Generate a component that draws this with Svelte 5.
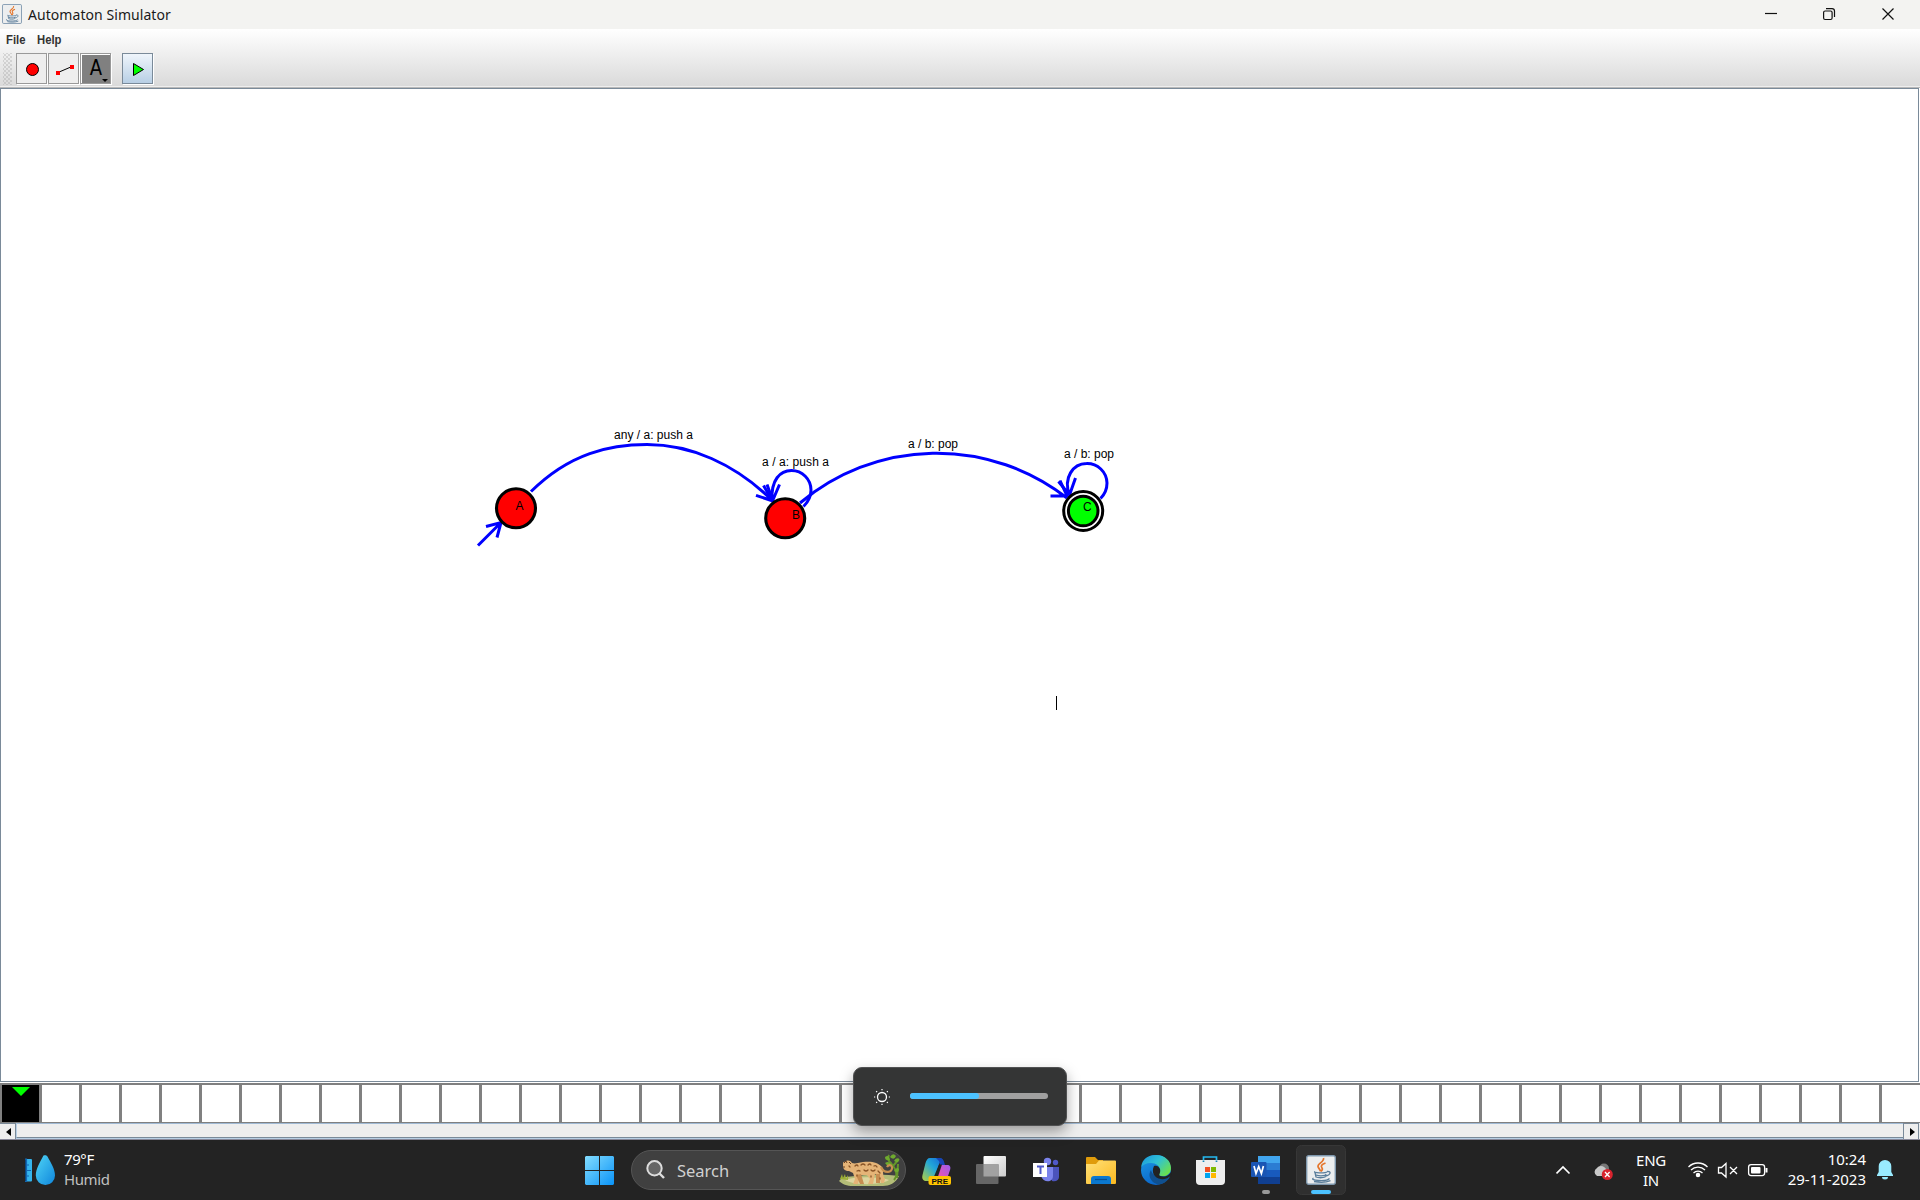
<script>
  const cells = Array.from({ length: 48 }, (_, i) => i);
  const labels = [
    { t: 'any / a: push a', x: 614, y: 439, w: 79 },
    { t: 'a / a: push a', x: 762, y: 466, w: 67 },
    { t: 'a / b: pop', x: 908, y: 448, w: 50 },
    { t: 'a / b: pop', x: 1064, y: 458, w: 50 },
  ];
</script>

{#snippet java()}
  <rect x="0.7" y="0.7" width="28.6" height="28.6" rx="2" fill="#eceeef" stroke="#7f98ae" stroke-width="1.4" />
  <path d="M17.500 3c1 4-6 5.500-5.500 8.500.3 2 2.500 3 2.500 5M19.500 8c-4 1.500-5 3-3.500 5 1 1.300 0 2.500-1 3.500" fill="none" stroke="#e5762c" stroke-width="1.700" />
  <path d="M9 16.500c-3 1.500 10 2 12.500.2M9 17.500l1 4.500c2 1 7 1 9 0l1-3M21 16.500c5-.5 3.500 3.500-1 4.500M10 20c3 1 7 1 9.500 0M7.500 23c-5 2.500 13 4 16 .5M8 26.500c5 1 12 1 16.500-.8" fill="none" stroke="#5a7d9a" stroke-width="1.300" />
{/snippet}

<div class="desk">
  <header class="title">
    <svg class="appicon" viewBox="0 0 30 30">{@render java()}</svg>
    <span>Automaton Simulator</span>
    <svg class="wc" width="160" height="29" viewBox="0 0 160 29">
      <path d="M5 13.500h12" stroke="#111" stroke-width="1.200" />
      <rect x="63.600" y="11" width="8.500" height="8.500" rx="1.500" fill="none" stroke="#111" stroke-width="1.200" />
      <path d="M66 8.600h6a2.500 2.500 0 0 1 2.500 2.500v6" fill="none" stroke="#111" stroke-width="1.200" />
      <path d="M122.500 8.500l11 11M133.500 8.500l-11 11" stroke="#111" stroke-width="1.200" />
    </svg>
  </header>

  <div class="bars">
    <nav><span>File</span><span>Help</span></nav>
    <div class="tools">
      <i class="grip"></i>
      <div class="btn">
        <svg viewBox="0 0 31 31"><circle cx="16.500" cy="16.500" r="6" fill="#f00" stroke="#000" /></svg>
      </div>
      <div class="btn">
        <svg viewBox="0 0 31 31"><path d="M10 19.500L24 13.500" stroke="#000" /><path d="M8 18h4v4H8zM22 12h4v4h-4z" fill="#f00" /></svg>
      </div>
      <div class="btn on">
        <b>A</b>
        <svg class="drop" viewBox="0 0 6 3"><path d="M0 0h6L3 3z" /></svg>
      </div>
      <div class="btn play">
        <svg viewBox="0 0 31 31"><path d="M11.500 10.500v12l10-6z" fill="#0f0" stroke="#000" /></svg>
      </div>
    </div>
  </div>

  <main>
    <svg class="graph" viewBox="1 89 1917 992">
      <g fill="none" stroke="#00f" stroke-width="3">
        <path d="M531 491.500C570 453 610 444.500 647 444.500C690 444.500 734 463 773 501M756 495.300L773 501L767 484.500" />
        <path d="M800 503A212 212 0 0 1 1067 498M1050.500 496H1067L1060 480.500" />
        <path d="M803.500 506.500C809 501 811 496 811 490A19.500 19.500 0 0 0 791.500 470.500C780 470.500 771 480 772 500M763.500 485.500L772.500 501L779.500 484.500" />
        <path d="M1100.500 498.500C1105 494 1107 489 1107 483A20 20 0 0 0 1086.500 463.500C1073 463.500 1063 478 1069.500 495M1058.500 481.500L1069.500 495L1075.500 478" />
        <path d="M478 545.500L501 522.500M486 526.500L501 522.500L497 537.500" />
      </g>
      <g stroke="#000">
        <circle cx="516" cy="508.300" r="19.500" fill="#f00" stroke-width="3.100" />
        <circle cx="785.200" cy="518.300" r="19.500" fill="#f00" stroke-width="3.100" />
        <circle cx="1083.200" cy="511" r="19.500" fill="#fff" stroke-width="3" />
        <circle cx="1083.200" cy="511" r="14.800" fill="#0f0" stroke-width="3" />
      </g>
      {#each labels as l}
        <text x={l.x} y={l.y} textLength={l.w}>{l.t}</text>
      {/each}
      <text x="515.500" y="510">A</text>
      <text x="792" y="519">B</text>
      <text x="1083" y="511">C</text>
      <path d="M1056.500 696v14" stroke="#000" />
    </svg>
  </main>

  <div class="tape">
    {#each cells as c}
      <div class="cell" class:head={c === 0}>
        {#if c === 0}<svg viewBox="0 0 18 9"><path d="M0 0h18L9 9z" fill="#0f0" /></svg>{/if}
      </div>
    {/each}
  </div>

  <div class="scroll">
    <div class="arrow"><svg viewBox="0 0 5 8"><path d="M5 0v8L0 4z" /></svg></div>
    <div class="track"></div>
    <div class="arrow right"><svg viewBox="0 0 5 8"><path d="M0 0v8L5 4z" /></svg></div>
  </div>

  <footer>
    <div class="weather">
      <svg width="31" height="31" viewBox="0 0 31 31">
        <defs><linearGradient id="drop" x1="0" y1="0" x2="1" y2="1"><stop stop-color="#4fd4f5" /><stop offset="1" stop-color="#0f86dc" /></linearGradient></defs>
        <rect x="0" y="4" width="7" height="22.500" rx="1" fill="#35b4ec" /><path d="M0 4h1.500v22.500H0zM1 10h3M1 15.500h5M1 21h3" stroke="#1267b4" stroke-width="1.200" />
        <path d="M18.500.5C20 0 21.500 0 22.500 1.500C26 8 30 14 30 20.500A9.600 9.600 0 0 1 10.800 20.500C10.800 14 15 7 18.500.5z" fill="url(#drop)" />
      </svg>
      <p>79°F<br /><small>Humid</small></p>
    </div>

    <div class="dock">
      <svg class="win" width="29" height="29" viewBox="0 0 29 29">
        <defs><linearGradient id="wg" x2="1" y2="1"><stop stop-color="#83ddff" /><stop offset="1" stop-color="#0a93f7" /></linearGradient></defs>
        <path d="M1 0h13v14H0V1zM15 0h13l1 1v13H15zM0 15h14v14H1l-1-1zM15 15h14v13l-1 1H15z" fill="url(#wg)" />
      </svg>

      <div class="search">
        <svg width="20" height="20" viewBox="0 0 20 20" fill="none" stroke="#ddd" stroke-width="2"><circle cx="8.500" cy="8.300" r="7.200" fill="#666" /><path d="M13.500 13.500l4.500 4.500" stroke-width="2.400" /></svg>
        <span>Search</span>
        <svg class="cat" width="61" height="33" viewBox="0 0 61 33">
          <path d="M0 27C5 21 12 23 20 22C33 20 50 21 60 22C57 29 50 32 44 32H14C8 32 3 30 0 27z" fill="#b4bd78" />
          <path d="M6 26C18 22 40 23 50 26C43 31 15 32 6 26z" fill="#ddd6a0" />
          <path d="M1 25l2-5 1 4 2-4 1 5 2-4 0 5" fill="#9caf35" />
          <path d="M55 26C60 20 56 14 52 9C48 6 49 3 50 1M54 12L60 5M58 24L59 10" fill="none" stroke="#65952a" stroke-width="2" />
          <path d="M46 3q4-3 5 3q-5 1-5-3M51 3q3-5 6-1q-2 5-6 1M46 9q4-3 7 2q-5 2-7-2M55 7q2-4 5-2q0 5-5 2M55 17q3-5 5-2q0 5-5 2" fill="#6fab2e" />
          <path d="M4 12C4 9 4 7 6 8C8 6 11 6 13 9C16 10 18 9 24 8C32 7 39 8 43 13C45 17 43 21 46 25L45 29H42L40 22L36 20L34 30H29L31 25L28 21H21L19 30H14L16 25L14 19L10 17C6 17 4 15 4 12z" fill="#e5b477" />
          <path d="M17 21L21 30H25L22 20M37 20L37 29H41L41 20" fill="#c78d51" />
          <path d="M42 13C45 20 54 19 53 13C52 10 49 11 48 13" fill="none" stroke="#c8904f" stroke-width="2.200" />
          <path d="M5 9l2-2 1 2M4 13h2M10 8l2 2" stroke="#6c4020" fill="none" />
          <path d="M16 12q2-2 3 0M22 11q2-2 4 0M29 11q2-2 3 0M35 12q2-1 3 1M18 17q2-1 3 0M25 16q2 2 4 0M32 16q2 2 4 0M39 17l2 2M18 21v1M32 22v1M41 24v1M10 12l1 1" stroke="#8a5527" fill="none" stroke-width="1.300" stroke-linecap="round" />
        </svg>
      </div>

      <svg class="apps" width="430" height="59" viewBox="917 1141 430 59">
        <defs>
          <linearGradient id="c1" x1="1" y1="0" x2="0" y2="1"><stop stop-color="#1464d8" /><stop offset=".45" stop-color="#22a7d8" /><stop offset="1" stop-color="#b8d23c" /></linearGradient>
          <linearGradient id="c2" x1="1" y1="0" x2="0" y2="1"><stop stop-color="#9a5cf0" /><stop offset=".55" stop-color="#e055b8" /><stop offset="1" stop-color="#ff9360" /></linearGradient>
          <linearGradient id="fo" x2="1" y2="1"><stop stop-color="#ffe17a" /><stop offset="1" stop-color="#fbb91f" /></linearGradient>
          <linearGradient id="e1" x2="1" y2=".7"><stop stop-color="#1a94dd" /><stop offset=".5" stop-color="#2fc1d6" /><stop offset="1" stop-color="#6be04c" /></linearGradient>
          <linearGradient id="e2" x2=".5" y2="1"><stop stop-color="#1d9be6" /><stop offset="1" stop-color="#0a64c8" /></linearGradient>
          <linearGradient id="tv" x2="1" y2="1"><stop stop-color="#fff" /><stop offset="1" stop-color="#ccc" /></linearGradient>
        </defs>
        <!-- copilot -->
        <path d="M930 1158h9c3 0 4 2 4.500 4l-4 1-5 15c-1 3-3 3-5 3h-3c-3 0-5-2-4-6l3-12c1-3 2-5 4.500-5z" fill="url(#c1)" />
        <path d="M936 1158h4c3 0 4 3 5 7h-5l-1-4z" fill="#1744b5" />
        <path d="M941 1165h6c3 0 4 2 3 5l-3 9c-1 4-3 5-6 5h-8z" fill="url(#c2)" />
        <path d="M939 1164.500h3l-4 12h-4z" fill="#222" />
        <rect x="928.500" y="1176" width="22.500" height="9" rx="2" fill="#ffc400" />
        <text class="pre" x="931.500" y="1183.500" textLength="16.500">PRE</text>
        <!-- task view -->
        <rect x="983.500" y="1156" width="22.500" height="20.500" rx="1" fill="url(#tv)" />
        <rect x="976" y="1164" width="22.500" height="20" rx="1" fill="#666" />
        <path d="M983.500 1164h15v12.500h-15z" fill="#a2a2a2" />
        <!-- teams -->
        <circle cx="1055.500" cy="1162.500" r="2.700" fill="#5059c9" /><path d="M1049 1167h10v10c0 3-3 5-7 4z" fill="#4b53bc" />
        <circle cx="1047.500" cy="1161.500" r="3.700" fill="#7b83eb" /><path d="M1041 1167h12v9c0 7-10 7-12 0z" fill="#7b83eb" />
        <path d="M1033 1163h14v14h-14z" fill="#fff" /><path d="M1037 1166.500h7M1040.500 1166.500v7.500" stroke="#5059c9" stroke-width="2" />
        <!-- explorer -->
        <path d="M1086 1158q0-1 1-1h8l3 3h5v5h-17z" fill="#e09c0b" /><path d="M1086 1164h10l3-3.500h16q1 0 1 1V1183q0 1-1 1h-28q-1 0-1-1z" fill="url(#fo)" />
        <path d="M1091 1184v-5q0-3 3-3h14q3 0 3 3v5z" fill="#0b78cf" /><path d="M1095 1179.500h12" stroke="#064f93" stroke-width="1.200" />
        <!-- edge -->
        <circle cx="1156" cy="1170" r="15" fill="url(#e2)" />
        <path d="M1141.200 1167C1142 1159 1148 1155 1156 1155C1165 1155 1171 1161 1171 1168C1171 1174 1166 1177 1161 1176C1157 1175 1160 1173 1160 1170C1160 1166 1156 1163 1151 1163C1146 1163 1143 1165 1141.200 1167z" fill="url(#e1)" />
        <path d="M1151 1170C1146 1178 1155 1186 1161 1184C1165 1183 1168 1180 1170 1177C1164 1180 1153 1178 1151 1170z" fill="#10508f" />
        <path d="M1154 1166C1151 1172 1154 1178 1161 1179C1166 1180 1169 1177 1170.500 1176L1171.500 1178L1172 1170C1169 1177 1164 1177 1160 1176C1158 1175 1161 1173 1160 1169C1159 1166 1156 1165 1154 1166z" fill="#222" />
        <!-- store -->
        <path d="M1203.500 1162v-5h13v5" fill="none" stroke="#25b9ef" stroke-width="1.700" />
        <path d="M1196 1160h29v21q0 4-4 4h-21q-4 0-4-4z" fill="#eee" />
        <path d="M1203.500 1160.500v1.500M1216.500 1160.500v1.500" stroke="#1687b8" stroke-width="1.700" />
        <path d="M1205 1167h5v5h-5z" fill="#f25022" /><path d="M1211 1167h5v5h-5z" fill="#7fba00" /><path d="M1205 1173h5v5h-5z" fill="#00a4ef" /><path d="M1211 1173h5v5h-5z" fill="#ffb900" />
        <!-- word -->
        <path d="M1258 1156h22v7h-22z" fill="#41a5ee" /><path d="M1258 1163h22v7h-22z" fill="#2b7cd3" /><path d="M1258 1170h22v7h-22z" fill="#185abd" /><path d="M1258 1177h22v7h-22z" fill="#103f91" />
        <rect x="1251" y="1162" width="15.500" height="15" rx="1" fill="#1a55b4" /><path d="M1254 1166l2 7.500 2.700-7 2.700 7 2-7.500" fill="none" stroke="#fff" stroke-width="1.700" />
        <rect x="1262" y="1190" width="8" height="4" rx="2" fill="#999" />
        <!-- running simulator -->
        <rect x="1296.500" y="1145.500" width="49" height="49" rx="5" fill="#2f2f2f" stroke="#373737" />
        <g transform="translate(1306 1155)">{@render java()}</g>
        <rect x="1311" y="1190" width="20" height="4" rx="2" fill="#4cc2ff" />
      </svg>
    </div>

    <div class="tray">
      <svg class="status" width="60" height="30" viewBox="1556 1155 60 30">
        <path d="M1556.500 1173.500l6.500-6.500 6.500 6.500" fill="none" stroke="#fff" stroke-width="1.700" />
        <circle cx="1604" cy="1168.500" r="5" fill="#777" /><path d="M1597 1176a4.500 4.500 0 0 1 0-8c2-3 8-3 10 3v5z" fill="#c8c8c8" />
        <circle cx="1607.300" cy="1174.500" r="5.500" fill="#d9232e" /><path d="M1605 1172l4.600 5M1609.600 1172l-4.600 5" stroke="#fff" stroke-width="1.300" />
      </svg>
      <p class="lang">ENG<br />IN</p>
      <svg class="net" width="82" height="20" viewBox="1687 1160 82 20" fill="none" stroke="#fff" stroke-width="1.300">
        <path d="M1688.500 1167a13.300 13.300 0 0 1 19 0M1691 1170a10 10 0 0 1 14 0M1693.500 1173a6.500 6.500 0 0 1 9 0" /><circle cx="1698" cy="1175" r="1.600" fill="#fff" />
        <path d="M1718.500 1167.500h3l4.500-4v13.500l-4.500-4h-3zM1730 1167l7 7M1737 1167l-7 7" />
        <rect x="1748.600" y="1164.600" width="16" height="11" rx="2.500" /><path d="M1766.500 1168v4.500" stroke-width="2" /><rect x="1751" y="1167" width="9.500" height="6.500" rx="1" fill="#fff" stroke="none" />
      </svg>
      <p class="clock">10:24<br />29-11-2023</p>
      <svg width="16" height="20" viewBox="0 0 16 20" fill="#99ebff"><path d="M8 0a6.300 6.300 0 0 0-6.300 6.300V12L0 15v1h16v-1l-1.700-3V6.300A6.300 6.300 0 0 0 8 0zM5 17h6a3 2.500 0 0 1-6 0z" /></svg>
    </div>
  </footer>

  <div class="osd">
    <svg width="18" height="18" viewBox="0 0 18 18" fill="none" stroke="#fff"><circle cx="9" cy="9" r="4.500" stroke-width="1.300" /><path d="M9 1v1.200M9 15.800v1.200M1 9h1.200M15.800 9h1.200M3.200 3.200l.9.9M13.900 13.900l.9.900M3.200 14.800l.9-.9M13.900 4.100l.9-.9" stroke-width="1.200" /></svg>
    <div class="slider"><i></i></div>
  </div>
</div>

<style>
  :global(body) { margin: 0; overflow: hidden; }
  .desk { width: 1920px; height: 1200px; display: flex; flex-direction: column; background: #fff; font-family: "Noto Sans", "Open Sans", sans-serif; position: relative; overflow: hidden; }
  svg { display: block; }
  p { margin: 0; }
  .title { height: 29px; background: #f3f3f1; display: flex; align-items: center; padding-left: 2px; font-size: 14px; letter-spacing: .06px; color: #1a1a1a; box-sizing: border-box; }
  .title span { margin-left: 6px; }
  .appicon { width: 20px; height: 20px; margin-top: -1px; }
  .wc { margin-left: auto; }
  .bars { height: 57px; background: linear-gradient(#fff, #dadada); border-bottom: 1px solid #eee; box-shadow: 0 1px 0 #b8b8b8; margin-bottom: 1px; }
  nav { height: 24px; display: flex; gap: 12px; padding-left: 6px; font: bold 12px/22px "Liberation Sans", sans-serif; color: #333; }
  nav span { transform: scaleX(.94); transform-origin: left; width: 19px; }
  .tools { display: flex; padding-left: 3px; }
  .grip { width: 9px; height: 32px; margin-right: 4px; background: radial-gradient(circle, #999 .5px, transparent .8px) 0 0 / 4px 4px, radial-gradient(circle, #999 .5px, transparent .8px) 2px 2px / 4px 4px; }
  .btn { width: 31px; height: 31px; margin-right: 1px; box-sizing: border-box; border: 1px solid #999; background: #eee; box-shadow: 1px 1px 0 #fff; position: relative; }
  .btn svg { width: 31px; height: 31px; margin: -1px; }
  .on { background: #808080; box-shadow: inset 1px 1px 0 #fff, 1px 1px 0 #fff; }
  .on b { display: block; font: 21px/29px "DejaVu Sans", sans-serif; text-align: center; padding-left: 1px; color: #000; transform: scaleX(.86); }
  .btn .drop { position: absolute; right: 2px; bottom: 1px; width: 6px; height: 3px; margin: 0; }
  .play { margin-left: 10px; border-color: #7a8a99; background: linear-gradient(#eff5fb, #b8cfe5); }
  .play svg path { stroke-width: 1; }
  main { height: 992px; border: 1px solid #7a8a99; margin-right: 1px; }
  .graph { width: 1917px; height: 992px; }
  .graph text { font: 12px "Liberation Sans", sans-serif; fill: #000; }
  .tape { margin-top: 1px; height: 37px; border-top: 2px solid #808080; border-bottom: 1px solid #808080; display: flex; padding-left: 2px; background: #808080; overflow: hidden; gap: 3px; }
  .cell { width: 37px; height: 37px; flex: none; background: #fff; }
  .cell:last-child { width: 38px; }
  .head { background: #000; }
  .head svg { width: 18px; margin: 2px 0 0 10px; }
  .scroll { height: 17px; display: flex; background: #eee; border-bottom: 1px solid #889; box-sizing: border-box; }
  .arrow { width: 15px; height: 15px; border-right: 1px solid #7a8a99; border-top: 1px solid #7a8a99; display: flex; align-items: center; justify-content: center; }
  .arrow svg { width: 5px; height: 8px; margin-left: 1px; }
  .right { border-left: 1px solid #7a8a99; margin-right: 1px; width: 14px; }
  .right svg { margin-left: 2px; }
  .track { flex: 1; background: #eee; border-top: 1px solid #9fb9d4; border-left: 1px solid #b8cfe5; border-bottom: 1px solid #7a8a99; height: 13px; box-shadow: 0 1px 0 #b8cfe5; }
  footer { flex: 1; background: #232323; color: #fff; display: flex; align-items: center; font-size: 15px; line-height: 20px; }
  .weather { display: flex; align-items: center; gap: 8px; width: 560px; padding-left: 25px; box-sizing: border-box; letter-spacing: -.4px; }
  .weather p { margin-top: -2px; }
  .weather small { font-size: 15px; color: #c0c0c0; }
  .dock { display: flex; align-items: center; padding-left: 25px; height: 59px; }
  .search { margin-left: 17px; margin-right: 11px; width: 275px; height: 40px; box-sizing: border-box; border: 1px solid #555; border-radius: 20px; background: #404040; display: flex; align-items: center; padding: 0 5px 0 14px; font-size: 16.500px; color: #d0d0d0; }
  .search span { margin-left: 11px; margin-top: 1px; }
  .cat { margin-left: auto; }
  .pre { font: bold 8px "Liberation Sans", sans-serif; fill: #111; }
  .tray { margin-left: auto; display: flex; align-items: center; padding-right: 27px; }
  .lang { text-align: center; width: 40px; margin-left: 15px; margin-right: 16px; }
  .clock { text-align: right; width: 80px; margin: -2px 11px 0 17px; white-space: nowrap; }
  .lang { letter-spacing: -.3px; }
  .osd { position: absolute; left: 853px; top: 1067px; width: 214px; height: 59px; box-sizing: border-box; border: 1px solid #505152; border-radius: 9px; background: #343535; box-shadow: 0 6px 14px rgba(0, 0, 0, .35); display: flex; align-items: center; padding-left: 19px; gap: 19px; }
  .slider { width: 138px; height: 6px; border-radius: 3px; background: #a0a0a0; margin-top: -1px; }
  .slider i { display: block; width: 69px; height: 6px; border-radius: 3px; background: #4cc2ff; }
</style>
